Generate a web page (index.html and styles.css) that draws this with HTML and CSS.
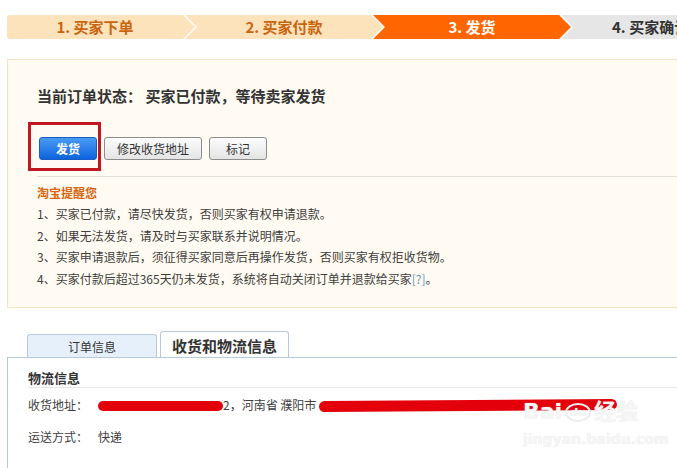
FILE: index.html
```html
<!DOCTYPE html>
<html lang="zh-CN">
<head>
<meta charset="utf-8">
<title>订单详情</title>
<link rel="stylesheet" href="styles.css">
</head>
<body>
<div class="page">
  <div class="steps">
    <div class="step step-first step-done">1. 买家下单</div>
    <div class="step step-done">2. 买家付款</div>
    <div class="step step-current">3. 发货</div>
    <div class="step step-todo">4. 买家确认收货</div>
  </div>

  <div class="panel">
    <div class="status">当前订单状态： 买家已付款，等待卖家发货</div>
    <div class="actions">
      <button class="btn btn-primary">发货<span class="mark"></span></button>
      <button class="btn">修改收货地址</button>
      <button class="btn btn-small">标记</button>
    </div>
    <div class="tips">
      <div class="tips-title">淘宝提醒您</div>
      <ol class="tips-list">
        <li>1、买家已付款，请尽快发货，否则买家有权申请退款。</li>
        <li>2、如果无法发货，请及时与买家联系并说明情况。</li>
        <li>3、买家申请退款后，须征得买家同意后再操作发货，否则买家有权拒收货物。</li>
        <li>4、买家付款后超过365天仍未发货，系统将自动关闭订单并退款给买家<a class="help">[?]</a>。</li>
      </ol>
    </div>
  </div>

  <div class="tabs">
    <div class="tab">订单信息</div>
    <div class="tab tab-active">收货和物流信息</div>
  </div>
  <div class="tab-body">
    <div class="section-title">物流信息</div>
    <div class="row row-first">
      <span class="label">收货地址：</span>
      <span class="value"><span class="scribble scribble-a"></span>2，河南省 濮阳市 <span class="scribble scribble-b"></span></span>
    </div>
    <div class="row row-second">
      <span class="label">运送方式：</span>
      <span class="value">快递</span>
    </div>
    <div class="watermark">
      <div class="wm-logo">Bai<span class="wm-du">du</span>经验</div>
      <div class="wm-url">jingyan.baidu.com</div>
    </div>
  </div>
</div>
</body>
</html>
```

FILE: styles.css
```css
html, body {
  margin: 0;
  padding: 0;
  overflow: hidden;
  background: #fff;
}

body {
  font-family: "Noto Sans CJK SC", "Noto Sans", sans-serif;
  font-size: 12px;
  color: #333;
}

.page {
  width: 780px;
  padding: 15px 0 0 7px;
}

/* step bar */
.steps {
  display: flex;
  height: 24px;
}

.step {
  flex: none;
  box-sizing: border-box;
  width: 198px;
  margin-left: -10px;
  padding: 0 12px;
  display: flex;
  align-items: center;
  justify-content: center;
  font-size: 15px;
  font-weight: bold;
  line-height: 24px;
  white-space: nowrap;
  overflow: hidden;
  clip-path: polygon(0 0, calc(100% - 12px) 0, 100% 50%, calc(100% - 12px) 100%, 0 100%, 12px 50%);
}

.step-first {
  width: 188px;
  margin-left: 0;
  padding-left: 0;
  border-radius: 3px 0 0 3px;
  clip-path: polygon(0 0, calc(100% - 12px) 0, 100% 50%, calc(100% - 12px) 100%, 0 100%);
}

.step-done {
  background: #fde3bc;
  color: #c9650f;
}

.step-current {
  background: #ff6600;
  color: #fff;
}

.step-todo {
  background: #e6e6e6;
  color: #333;
  justify-content: flex-start;
  padding-left: 51px;
}

/* status panel */
.panel {
  margin-top: 20px;
  border: 1px solid #f0e5c4;
  border-right: none;
  background: #fffbf2;
  padding: 26px 0 18px 29px;
}

.status {
  font-size: 15px;
  font-weight: bold;
  line-height: 20px;
  color: #333;
}

.actions {
  display: flex;
  gap: 7px;
  margin-top: 31px;
}

.btn {
  position: relative;
  box-sizing: border-box;
  height: 23px;
  padding: 0 12px;
  border: 1px solid #8c8c8c;
  border-radius: 3px;
  background: linear-gradient(#fdfdfd, #e4e4e4);
  font-family: "Noto Sans CJK SC", sans-serif;
  font-size: 12px;
  line-height: 21px;
  color: #333;
  cursor: pointer;
}

.btn-small {
  width: 58px;
}

.btn-primary {
  width: 58px;
  margin-left: 2px;
  border-color: #1b5cc0;
  background: linear-gradient(#4a9bf5, #0d63dc);
  color: #fff;
  font-weight: bold;
}

.mark {
  position: absolute;
  left: -12px;
  top: -16px;
  width: 73px;
  height: 49px;
  box-sizing: border-box;
  border: 3px solid #c1181f;
}

.tips {
  margin-top: 16px;
  border-top: 1px solid #e3dfd3;
  padding-top: 5px;
}

.tips-title {
  font-size: 12px;
  font-weight: bold;
  line-height: 21px;
  color: #d8650c;
}

.tips-list {
  list-style: none;
  margin: 0;
  padding: 0;
}

.tips-list li {
  line-height: 21.5px;
  color: #404040;
}

.help {
  color: #6b8fc0;
}

/* tabs */
.tabs {
  display: flex;
  align-items: flex-end;
  gap: 3px;
  margin-top: 23px;
  padding-left: 20px;
}

.tab {
  box-sizing: border-box;
  width: 130px;
  height: 23px;
  border: 1px solid #b8cbdd;
  border-bottom: none;
  border-radius: 3px 3px 0 0;
  background: #e6f0fb;
  text-align: center;
  font-size: 12px;
  line-height: 23px;
  color: #333;
}

.tab-active {
  width: 129px;
  height: 27px;
  margin-bottom: -1px;
  background: #fff;
  font-size: 15px;
  font-weight: bold;
  line-height: 27px;
  position: relative;
}

.tab-body {
  position: relative;
  border-top: 1px solid #b8cbdd;
  border-left: 1px solid #b8cbdd;
  padding: 0 0 40px 20px;
}

.section-title {
  padding-top: 11px;
  font-size: 13px;
  font-weight: bold;
  line-height: 18px;
  border-bottom: 1px solid #e6e6e6;
}

.row {
  display: flex;
  line-height: 20px;
  color: #404040;
}

.row-first {
  margin-top: 7px;
}

.row-second {
  margin-top: 12px;
}

.label {
  width: 70px;
  flex: none;
}

.value {
  white-space: nowrap;
}

.scribble {
  display: inline-block;
  height: 10px;
  border-radius: 6px;
  background: #e4000b;
  vertical-align: -1px;
}

.scribble-a {
  width: 125px;
}

.scribble-b {
  width: 298px;
  height: 11px;
  transform: rotate(-0.4deg);
}

.watermark {
  position: absolute;
  left: 515px;
  top: 40px;
  color: #f6f6f6;
  font-family: "DejaVu Sans", "Noto Sans CJK SC", sans-serif;
  text-shadow: 0 0 1px #e2e2e2;
}

.wm-logo {
  font-size: 22px;
  font-weight: bold;
  line-height: 28px;
}

.wm-du {
  display: inline-block;
  font-size: 11px;
  border: 2px solid #ececec;
  border-radius: 50%;
  padding: 0 3px;
  line-height: 15px;
  margin: 0 3px;
  vertical-align: 3px;
}

.wm-url {
  font-size: 14px;
  font-weight: bold;
  line-height: 20px;
  margin-top: 3px;
}
```
